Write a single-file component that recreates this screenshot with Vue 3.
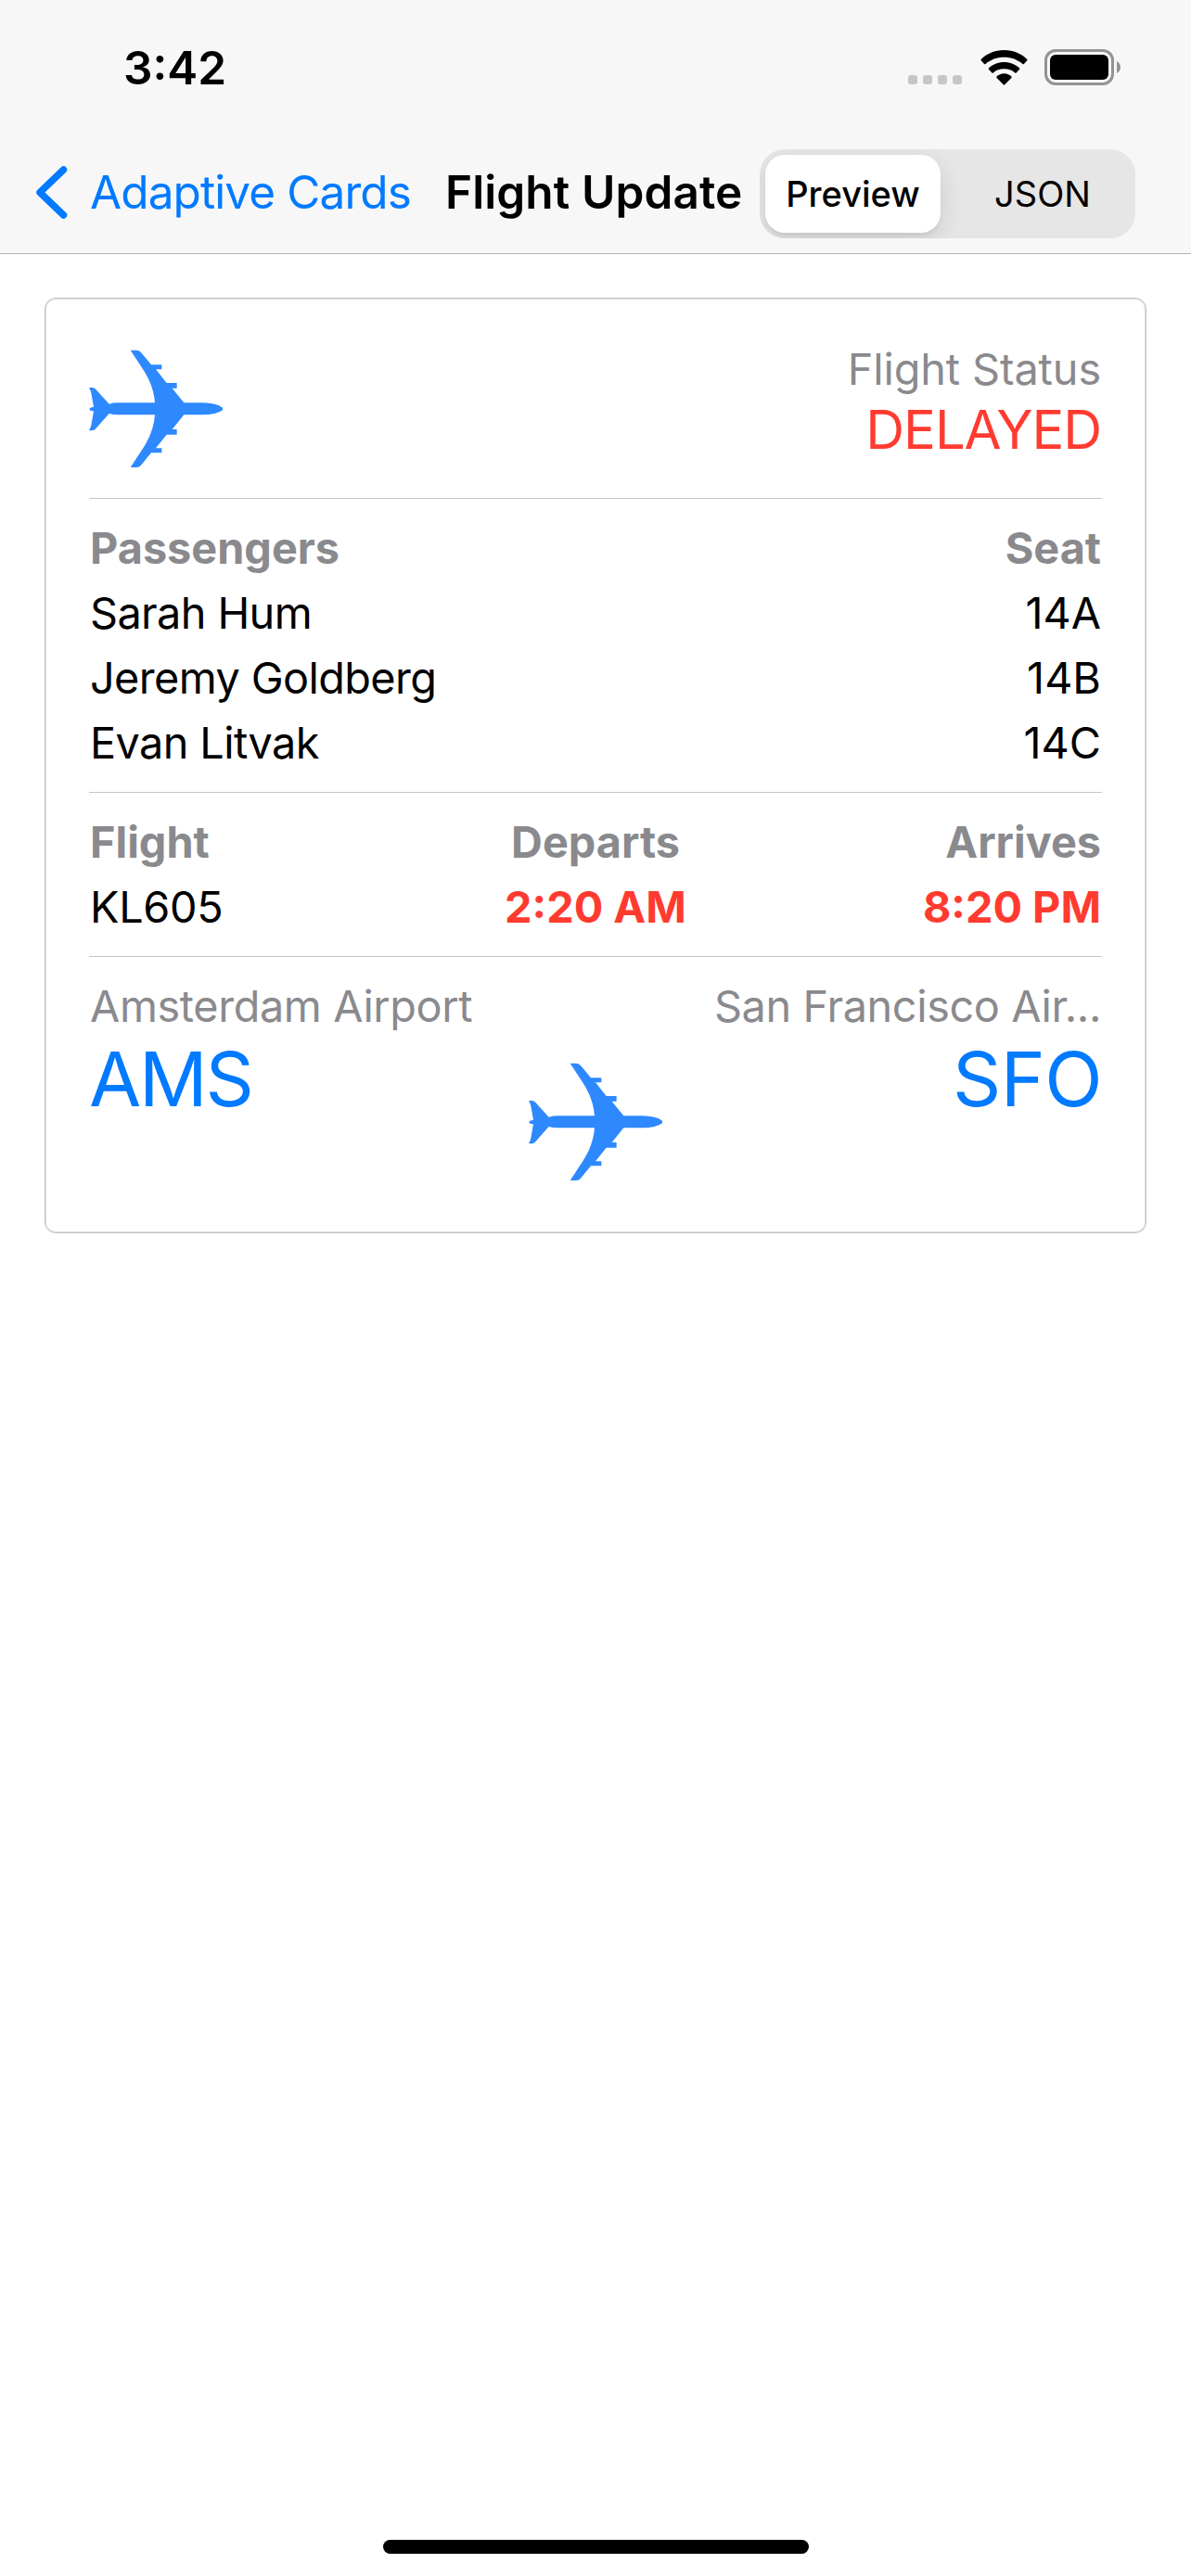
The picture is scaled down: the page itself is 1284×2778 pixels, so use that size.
<script setup>
const passengers = [
  { name: 'Sarah Hum', seat: '14A' },
  { name: 'Jeremy Goldberg', seat: '14B' },
  { name: 'Evan Litvak', seat: '14C' },
]
const planePath =
  'M168 324H180Q186 325 191 331L233 377Q245 373 262 373H381Q378 335 362 300Q352 278 340 261L302 203H322Q331 204 336 210L369 250H403V265H384L419 309H452V326H437L475 373H535Q580 374 600 389V397Q580 412 535 412H475L437 459H452V476H419L384 520H403V535H369L336 575Q331 582 322 582H302L340 524Q352 506 362 485Q378 450 381 412H262Q245 412 233 408L191 455Q186 462 180 463H168L174 450L183 400L172 398L169 393L172 389L183 386L174 337Z'
</script>

<template>
  <main class="screen">
    <header class="header">
      <div class="status-bar">
        <span class="time">3:42</span>
        <div class="indicators">
          <div class="dots"><i v-for="n in 4" :key="n"></i></div>
          <svg class="wifi" width="51" height="38" viewBox="0 0 51 38">
            <path d="M25.5 0C35.4 0 44.400 3.900 50.300 9.900Q50.900 10.600 50.300 11.300L46.900 14.900Q46.200 15.500 45.500 14.900C40.200 10.300 33.200 7.700 25.500 7.700S10.800 10.300 5.500 14.900Q4.800 15.500 4.100 14.900L.7 11.300Q.1 10.600 .7 9.900C6.600 3.900 15.600 0 25.500 0Z" />
            <path d="M25.500 12.900C32 12.900 37.800 15.400 42.100 19.400Q42.700 20.100 42.100 20.800L38.600 24.400Q37.900 25 37.200 24.400C34.100 21.800 30.100 20.300 25.500 20.300S16.900 21.800 13.800 24.400Q13.100 25 12.400 24.400L8.900 20.800Q8.300 20.100 8.900 19.400C13.200 15.400 19 12.900 25.500 12.900Z" />
            <path d="M25.500 25.300C28.700 25.300 31.500 26.600 33.400 28.600Q34 29.300 33.400 30L26.200 37.200Q25.500 37.800 24.800 37.200L17.600 30Q17 29.300 17.600 28.600C19.500 26.600 22.300 25.300 25.500 25.300Z" />
          </svg>
          <svg class="battery" width="82" height="39" viewBox="0 0 82 39">
            <rect x="1.500" y="1.500" width="72" height="36" rx="10.500" fill="none" stroke="#939393" stroke-width="3" />
            <rect x="6" y="6" width="63" height="27" rx="6" />
            <path d="M78 13Q82 15.500 82 19.500T78 26Z" fill="#939393" />
          </svg>
        </div>
      </div>
      <nav class="nav-bar">
        <a class="back">
          <svg width="35" height="57" viewBox="0 0 35 57">
            <path d="M30.500 4L5 28.500L30.500 53" fill="none" stroke="#007aff" stroke-width="7.500" stroke-linecap="round" stroke-linejoin="round" />
          </svg>
          <span>Adaptive Cards</span>
        </a>
        <h1 class="title">Flight Update</h1>
        <div class="segments">
          <button class="segment active">Preview</button>
          <button class="segment">JSON</button>
        </div>
      </nav>
    </header>

    <article class="card">
      <section class="row">
        <svg class="plane" viewBox="168 177 432 432"><path :d="planePath" /></svg>
        <div class="end">
          <p class="line muted status-label">Flight Status</p>
          <p class="delayed">DELAYED</p>
        </div>
      </section>

      <section class="list divided">
        <div class="row heading">
          <p class="line">Passengers</p>
          <p class="line">Seat</p>
        </div>
        <div v-for="p in passengers" :key="p.seat" class="row">
          <p class="line name">{{ p.name }}</p>
          <p class="line">{{ p.seat }}</p>
        </div>
      </section>

      <section class="thirds divided">
        <div class="list">
          <p class="line heading">Flight</p>
          <p class="line number">KL605</p>
        </div>
        <div class="list center">
          <p class="line heading">Departs</p>
          <p class="line alert">2:20 AM</p>
        </div>
        <div class="list end">
          <p class="line heading">Arrives</p>
          <p class="line alert">8:20 PM</p>
        </div>
      </section>

      <section class="route divided">
        <div class="airport">
          <p class="line muted airport-name">Amsterdam Airport</p>
          <p class="code origin">AMS</p>
        </div>
        <svg class="plane" viewBox="168 177 432 432"><path :d="planePath" /></svg>
        <div class="airport end">
          <p class="line muted airport-name">San Francisco Air...</p>
          <p class="code">SFO</p>
        </div>
      </section>
    </article>

    <div class="home-indicator"></div>
  </main>
</template>

<style>
body {
  margin: 0;
  background: #fff;
}
</style>

<style scoped>
.screen {
  display: flex;
  flex-direction: column;
  box-sizing: border-box;
  width: 1284px;
  height: 2778px;
  padding-bottom: 24px;
  background: #fff;
  color: #000;
  font-family: Inter, 'Liberation Sans', sans-serif;
}
p,
h1 {
  margin: 0;
  white-space: pre;
}
.header {
  box-sizing: border-box;
  height: 274px;
  background: #f7f7f7;
  border-bottom: 1px solid #b2b2b2;
}
.status-bar {
  display: flex;
  justify-content: space-between;
  height: 145px;
  padding: 0 76px 0 133px;
}
.time {
  padding-top: 43px;
  font-size: 49.5px;
  line-height: 60px;
  font-weight: 600;
}
.indicators {
  display: flex;
  align-items: flex-start;
}
.dots {
  display: flex;
  gap: 6px;
  padding: 81px 20px 0 0;
}
.dots i {
  width: 10px;
  height: 10px;
  border-radius: 3px;
  background: #c6c6c6;
}
.wifi {
  margin: 54px 18px 0 0;
}
.battery {
  margin-top: 53px;
}
.nav-bar {
  display: flex;
  align-items: center;
  height: 128px;
  padding-left: 38px;
}
.back {
  display: flex;
  align-items: center;
  gap: 24px;
  width: 442px;
  padding-bottom: 4px;
  color: #007aff;
  font-size: 49.5px;
  line-height: 60px;
  letter-spacing: -0.9px;
  white-space: nowrap;
}
.title {
  width: 339px;
  padding-bottom: 4px;
  font-size: 49.5px;
  line-height: 60px;
  font-weight: 600;
  letter-spacing: 0.1px;
}
.segments {
  display: flex;
  box-sizing: border-box;
  width: 405px;
  height: 96px;
  padding: 6px;
  border-radius: 27px;
  background: #e6e6e6;
  overflow: hidden;
}
.segment {
  width: 189px;
  padding: 0;
  border: 0;
  border-radius: 21px;
  background: none;
  color: #000;
  font: 400 38px/46px Inter, sans-serif;
}
.segment + .segment {
  width: 204px;
  padding-left: 16px;
}
.segment.active {
  background: #fff;
  font-weight: 500;
  box-shadow: 0 9px 24px rgba(0, 0, 0, 0.12), 0 3px 3px rgba(0, 0, 0, 0.04);
}
.card {
  box-sizing: border-box;
  width: 1188px;
  margin: 47px 48px 0;
  padding: 47px;
  border: 1px solid #c2c2c2;
  border-radius: 12px;
  box-shadow: inset 0 0 0 1px #dedede;
}
.row {
  display: flex;
  justify-content: space-between;
}
.divided {
  margin-top: 24px;
  padding-top: 24px;
  border-top: 1px solid #c4c4c4;
}
.plane {
  display: block;
  width: 144px;
  height: 144px;
  fill: #2e89ff;
}
.list {
  display: flex;
  flex-direction: column;
  gap: 12px;
}
.thirds {
  display: grid;
  grid-template-columns: repeat(3, 1fr);
}
.route {
  display: grid;
  grid-template-columns: 1fr 144px 1fr;
}
.route .plane {
  margin-top: 82px;
}
.line {
  padding: 0 1px;
  font-size: 46.8px;
  line-height: 58px;
}
.name {
  letter-spacing: -0.6px;
}
.number {
  letter-spacing: -0.3px;
}
.status-label {
  letter-spacing: -0.1px;
}
.airport-name {
  letter-spacing: -0.38px;
}
.muted {
  color: #8a8a8e;
}
.heading,
.heading .line {
  color: #8a8a8e;
  font-weight: 700;
}
.alert {
  color: #ff3b30;
  font-weight: 700;
}
.delayed {
  padding-right: 1px;
  color: #ff3b30;
  font-size: 58px;
  line-height: 72px;
  letter-spacing: -1.1px;
}
.code {
  color: #007aff;
  font-size: 81.6px;
  line-height: 100px;
  letter-spacing: -0.6px;
}
.code.origin {
  letter-spacing: -2.2px;
}
.center {
  text-align: center;
}
.end {
  text-align: right;
}
.airport.end {
  display: flex;
  flex-direction: column;
  align-items: flex-end;
}
.home-indicator {
  width: 459px;
  height: 15px;
  margin: auto auto 0;
  border-radius: 8px;
  background: #000;
}
</style>
